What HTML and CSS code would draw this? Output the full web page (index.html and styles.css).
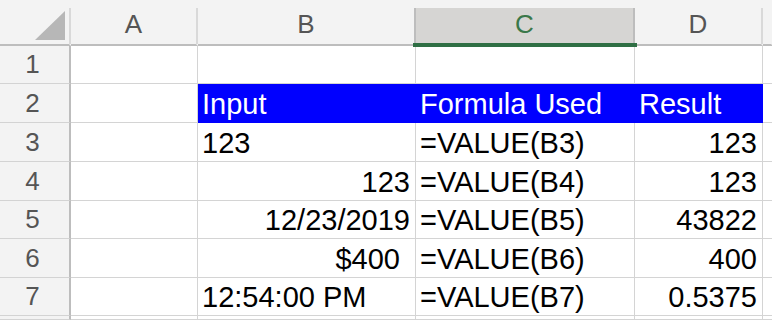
FILE: index.html
```html
<!DOCTYPE html>
<html>
<head>
<meta charset="utf-8">
<link rel="stylesheet" href="styles.css">
</head>
<body>
<div class="sheet">
  <div class="hcell corner"><svg class="tri" width="30" height="29" viewBox="0 0 30 29"><polygon points="30,0 30,29 0,29" fill="#b7b7b7"/></svg></div>
  <div class="hcell col">A</div>
  <div class="hcell col dark">B</div>
  <div class="hcell col sel dark">C</div>
  <div class="hcell col">D</div>
  <div class="hcell col last"></div>

  <div class="rh">1</div>
  <div class="c"></div><div class="c"></div><div class="c"></div><div class="c"></div><div class="c"></div>

  <div class="rh">2</div>
  <div class="c"></div>
  <div class="c fill">Input</div>
  <div class="c fill">Formula Used</div>
  <div class="c fill">Result</div>
  <div class="c"></div>

  <div class="rh">3</div>
  <div class="c"></div>
  <div class="c">123</div>
  <div class="c">=VALUE(B3)</div>
  <div class="c r">123</div>
  <div class="c"></div>

  <div class="rh">4</div>
  <div class="c"></div>
  <div class="c r">123</div>
  <div class="c">=VALUE(B4)</div>
  <div class="c r">123</div>
  <div class="c"></div>

  <div class="rh">5</div>
  <div class="c"></div>
  <div class="c r">12/23/2019</div>
  <div class="c">=VALUE(B5)</div>
  <div class="c r">43822</div>
  <div class="c"></div>

  <div class="rh">6</div>
  <div class="c"></div>
  <div class="c r cur">$400</div>
  <div class="c">=VALUE(B6)</div>
  <div class="c r">400</div>
  <div class="c"></div>

  <div class="rh">7</div>
  <div class="c"></div>
  <div class="c">12:54:00 PM</div>
  <div class="c">=VALUE(B7)</div>
  <div class="c r">0.5375</div>
  <div class="c"></div>

  <div class="rh"></div>
  <div class="c"></div><div class="c"></div><div class="c"></div><div class="c"></div><div class="c"></div>
</div>
</body>
</html>
```
FILE: styles.css
```css
html, body {
  margin: 0;
  padding: 0;
  background: #ffffff;
  overflow: hidden;
}

.sheet {
  width: 772px;
  height: 320px;
  display: grid;
  grid-template-columns: 71px 127px 218px 219px 128px 1fr;
  grid-template-rows: 46px 38px 39px 39px 39px 38px 39px 38px 1fr;
  font-family: "Liberation Sans", Arial, sans-serif;
  overflow: hidden;
}

.hcell {
  box-sizing: border-box;
  background: #f3f3f3;
  border-bottom: 2px solid #bdbdbd;
  padding-top: 8px;
  display: flex;
  position: relative;
}

.hcell.col {
  justify-content: center;
  align-items: center;
  font-size: 26px;
  color: #555555;
  padding-bottom: 3px;
  border-right: 2px solid #f3f3f3;
}

.hcell.corner {
  border-right: 2px solid #f3f3f3;
}

.hcell.col::before,
.hcell.corner::before {
  content: "";
  position: absolute;
  top: 8px;
  bottom: 0;
  right: -2px;
  width: 2px;
  background: #d9d9d9;
}

.hcell.dark::before {
  background: #bdbdbd;
}

.tri {
  position: absolute;
  left: 35px;
  top: 11px;
}

.hcell.sel {
  color: #3a7849;
  background: #f3f3f3 linear-gradient(#d6d5d3, #d6d5d3) no-repeat 0 8px / 100% 100%;
}

.hcell.sel::after {
  content: "";
  position: absolute;
  left: -3px;
  right: -4px;
  top: 43px;
  height: 4px;
  background: #2f6f44;
  z-index: 2;
}

.hcell.last::before {
  display: none;
}

.rh {
  box-sizing: border-box;
  background: #f3f3f3;
  border-right: 2px solid #bdbdbd;
  border-bottom: 1px solid #d3d3d3;
  display: flex;
  align-items: center;
  justify-content: center;
  padding-right: 4px;
  font-size: 26px;
  color: #555555;
}

.c {
  box-sizing: border-box;
  border-right: 1px solid #d4d4d4;
  border-bottom: 1px solid #d4d4d4;
  display: flex;
  align-items: flex-end;
  padding: 0 5px 1px 4px;
  font-size: 29px;
  color: #000000;
  white-space: nowrap;
  overflow: hidden;
}

.c.r {
  justify-content: flex-end;
}

.c.cur {
  padding-right: 15px;
}

.c.fill {
  background: #0000ff;
  color: #ffffff;
  border-right-color: #0000ff;
  border-bottom-color: #0000ff;
}
```
